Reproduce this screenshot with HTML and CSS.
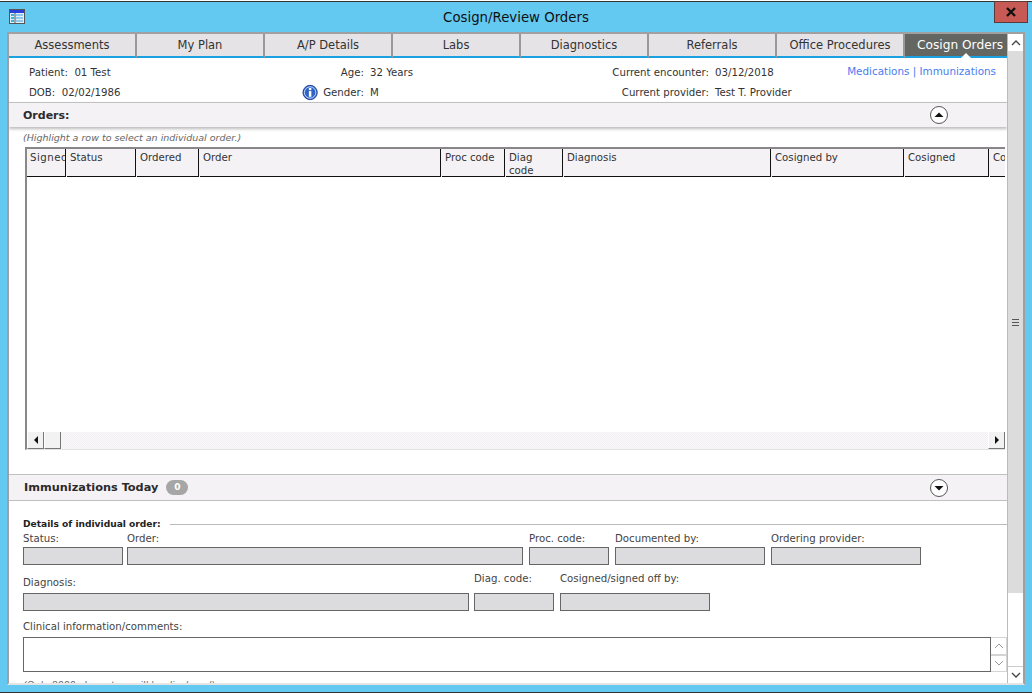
FILE: index.html
```html
<!DOCTYPE html>
<html lang="en">
<head>
    <meta charset="UTF-8">
    <title>Cosign/Review Orders</title>
    <link rel="stylesheet" href="styles.css">
</head>
<body>
    <div class="window">
        <div class="titlebar">
            <svg class="app-icon" width="16" height="15" viewBox="0 0 16 15">
                <rect x="0.5" y="0.5" width="15" height="14" fill="#dff1fb" stroke="#555"/>
                <rect x="1" y="1" width="14" height="3" fill="#2c3fd8"/>
                <path d="M2 6h3M2 9h3M2 12h3" stroke="#3ab4e4" stroke-width="2"/>
                <path d="M7 6h7M7 9h7M7 12h7" stroke="#8fc8e8" stroke-width="2"/>
                <path d="M6 4v10" stroke="#555"/>
            </svg>
            <span class="title">Cosign/Review Orders</span>
            <button class="close-btn">
                <svg width="12" height="10" viewBox="0 0 12 10"><path d="M2 1l8 8M10 1l-8 8" stroke="#111" stroke-width="2.4"/></svg>
            </button>
        </div>

        <div class="frame">
            <div class="tabs">
                <div class="tab">Assessments</div>
                <div class="tab">My Plan</div>
                <div class="tab">A/P Details</div>
                <div class="tab">Labs</div>
                <div class="tab">Diagnostics</div>
                <div class="tab">Referrals</div>
                <div class="tab">Office Procedures</div>
                <div class="tab active">Cosign Orders</div>
            </div>

            <div class="body-row">
                <div class="main">
                    <div class="patient">
                        <div>Patient:&nbsp; 01 Test</div>
                        <div class="lbl">Age:</div>
                        <div>32 Years</div>
                        <div class="lbl">Current encounter:</div>
                        <div>03/12/2018</div>
                        <div class="links">Medications | Immunizations</div>
                        <div>DOB:&nbsp; 02/02/1986</div>
                        <div class="lbl gender">
                            <svg width="17" height="17" viewBox="0 0 17 17">
                                <circle cx="8.5" cy="8.5" r="7.5" fill="#2f62c8" stroke="#1b3f96"/>
                                <circle cx="8.5" cy="8.5" r="6" fill="none" stroke="#cfe0fa"/>
                                <rect x="7.2" y="7" width="2.6" height="6" fill="#fff"/>
                                <rect x="7.2" y="3.8" width="2.6" height="2.2" fill="#fff"/>
                            </svg>
                            <span>Gender:</span>
                        </div>
                        <div>M</div>
                        <div class="lbl">Current provider:</div>
                        <div>Test T. Provider</div>
                        <div></div>
                    </div>

                    <div class="section orders-head">
                        <span class="section-name small">Orders:</span>
                        <svg class="toggle" width="20" height="20" viewBox="0 0 20 20">
                            <circle cx="10" cy="10" r="8.5" fill="#fff" stroke="#555"/>
                            <path d="M5.5 12L10 7.5l4.5 4.500z" fill="#111"/>
                        </svg>
                    </div>
                    <p class="hint">(Highlight a row to select an individual order.)</p>

                    <div class="grid-box">
                        <div class="grid-head">
                            <div class="col w-signed">Signed</div>
                            <div class="col w-status">Status</div>
                            <div class="col w-ordered">Ordered</div>
                            <div class="col w-order">Order</div>
                            <div class="col w-proc">Proc code</div>
                            <div class="col w-diag">Diag<br>code</div>
                            <div class="col w-diagnosis">Diagnosis</div>
                            <div class="col w-cosby">Cosigned by</div>
                            <div class="col w-cos">Cosigned</div>
                            <div class="col w-last">Cosigned</div>
                        </div>
                        <div class="grid-rows"></div>
                        <div class="hscroll">
                            <div class="hbtn"><span class="arrow-left"></span></div>
                            <div class="hthumb"></div>
                            <div class="htrack"></div>
                            <div class="hbtn"><span class="arrow-right"></span></div>
                        </div>
                    </div>

                    <div class="section imm-head">
                        <div class="imm-left">
                            <span class="section-name">Immunizations Today</span>
                            <span class="badge">0</span>
                        </div>
                        <svg class="toggle" width="20" height="20" viewBox="0 0 20 20">
                            <circle cx="10" cy="10" r="8.5" fill="#fff" stroke="#555"/>
                            <path d="M5.500 8L10 12.500 14.500 8z" fill="#111"/>
                        </svg>
                    </div>

                    <div class="details-title"><b>Details of individual order:</b><span class="rule"></span></div>

                    <div class="field-row row-one">
                        <div class="field w-100"><label>Status:</label><div class="box"></div></div>
                        <div class="field w-396"><label>Order:</label><div class="box"></div></div>
                        <div class="field w-80"><label>Proc. code:</label><div class="box"></div></div>
                        <div class="field w-150"><label>Documented by:</label><div class="box"></div></div>
                        <div class="field w-150"><label>Ordering provider:</label><div class="box"></div></div>
                    </div>

                    <div class="field-row row-two">
                        <div class="field w-446"><label class="low">Diagnosis:</label><div class="box"></div></div>
                        <div class="field w-80"><label>Diag. code:</label><div class="box"></div></div>
                        <div class="field w-150"><label>Cosigned/signed off by:</label><div class="box"></div></div>
                    </div>

                    <label class="comments-label">Clinical information/comments:</label>
                    <div class="comments">
                        <div class="textbox"></div>
                        <div class="spin">
                            <div class="spin-btn"><svg width="10" height="6" viewBox="0 0 10 6"><path d="M1 5l4-4 4 4" fill="none" stroke="#999"/></svg></div>
                            <div class="spin-btn"><svg width="10" height="6" viewBox="0 0 10 6"><path d="M1 1l4 4 4-4" fill="none" stroke="#999"/></svg></div>
                        </div>
                    </div>
                    <p class="hint clipped">(Only 8000 characters will be displayed)</p>
                </div>

                <div class="vscroll">
                    <div class="vbtn"><svg width="10" height="6" viewBox="0 0 10 6"><path d="M1 5l4-4 4 4" fill="none" stroke="#444" stroke-width="1.300"/></svg></div>
                    <div class="vthumb"><span class="grip"></span></div>
                    <div class="vtrack"></div>
                    <div class="vbtn bottom"><svg width="10" height="6" viewBox="0 0 10 6"><path d="M1 1l4 4 4-4" fill="none" stroke="#444" stroke-width="1.300"/></svg></div>
                </div>
            </div>
        </div>
    </div>
</body>
</html>
```

FILE: styles.css
```css
* {
    box-sizing: border-box;
}
html, body {
    margin: 0;
    height: 694px;
    overflow: hidden;
}
body {
    font-family: "DejaVu Sans", sans-serif;
    font-size: 10.2px;
    color: #333;
    background: #fff;
}
.window {
    height: 692px;
    margin-top: 1px;
    background: #63c9f1;
    border-top: 1px solid #333;
    border-bottom: 1px solid #333;
    display: flex;
    flex-direction: column;
}

/* title bar */
.titlebar {
    height: 30px;
    flex: none;
    position: relative;
    display: flex;
    align-items: center;
    justify-content: center;
}
.app-icon {
    position: absolute;
    left: 9px;
    top: 7px;
}
.title {
    font-size: 13.3px;
    color: #111;
}
.close-btn {
    position: absolute;
    right: 4px;
    top: -1px;
    width: 34px;
    height: 22px;
    padding: 0;
    background: #c75a55;
    border: 1px solid #5b3a3a;
    display: flex;
    align-items: center;
    justify-content: center;
}

/* frame + tabs */
.frame {
    flex: 1;
    margin: 0 7px 7px 7px;
    border: 2px solid #a0a0a0;
    border-bottom: 2px solid #e4e4e4;
    background: #fff;
    display: flex;
    flex-direction: column;
    overflow: hidden;
}
.tabs {
    display: flex;
    height: 24px;
    flex: none;
}
.tab {
    width: 128px;
    height: 24px;
    background: #e6e3e6;
    border-right: 2px solid #999;
    border-bottom: 2px solid #1ba1e2;
    font-size: 11.5px;
    display: flex;
    align-items: center;
    justify-content: center;
    color: #333;
}
.tab.active {
    position: relative;
    flex: 1;
    background: #646662;
    color: #fff;
    border-right: none;
    white-space: nowrap;
    font-size: 12.2px;
    margin-right: 16px;
    padding-left: 8px;
}
.tab.active::after {
    content: "";
    position: absolute;
    left: 56px;
    bottom: -2px;
    border: 5px solid transparent;
    border-bottom-color: #fff;
    border-top: none;
}

.body-row {
    flex: 1;
    display: flex;
    min-height: 0;
    margin-top: -24px;
}
.main {
    flex: 1;
    min-width: 0;
    padding-top: 24px;
    overflow: hidden;
}

/* patient strip */
.patient {
    display: grid;
    grid-template-columns: 276px 65px 135px 210px 133px 1fr;
    grid-auto-rows: 20px;
    padding: 4px 11px 0 20px;
    height: 44px;
    align-items: center;
    white-space: nowrap;
}
.lbl {
    text-align: right;
    padding-right: 6px;
}
.gender {
    display: flex;
    justify-content: flex-end;
    align-items: center;
    gap: 5px;
    margin-left: -3px;
}
.links {
    color: #4a7cf0;
    font-size: 10.4px;
    text-align: right;
    margin-top: -3px;
    margin-left: -40px;
}

/* collapsible section bars */
.section {
    display: flex;
    align-items: center;
    justify-content: space-between;
    background: #f5f2f6;
    border-top: 1px solid #c0c0c0;
    padding: 0 58px 0 14px;
}
.orders-head {
    height: 25px;
    box-shadow: 0 2px 3px #bbb;
}
.imm-head {
    height: 27px;
    margin-top: 24px;
    border-bottom: 1px solid #c0c0c0;
}
.section-name {
    font-size: 11.3px;
    font-weight: bold;
    color: #2b2b2b;
}
.section-name.small {
    font-size: 11px;
}
.imm-left {
    display: flex;
    align-items: center;
    gap: 8px;
    padding-left: 1px;
}
.badge {
    width: 22px;
    height: 15px;
    border-radius: 8px;
    background: #a6a6a6;
    color: #fff;
    font-size: 9px;
    font-weight: bold;
    text-align: center;
    line-height: 15px;
}
.hint {
    margin: 4px 0 0 14px;
    font-size: 9.5px;
    font-style: italic;
    color: #666;
    height: 14px;
    line-height: 14px;
}
.hint.clipped {
    margin-top: 6px;
}

/* orders grid */
.grid-box {
    margin: 2px 2px 0 16px;
    height: 303px;
    border-top: 2px solid #888;
    border-left: 2px solid #888;
    border-bottom: 1px solid #e2e2e2;
    display: flex;
    flex-direction: column;
}
.grid-head {
    display: flex;
    height: 28px;
    flex: none;
    overflow: hidden;
    background: #f5f2f6;
}
.col {
    flex: none;
    height: 28px;
    padding: 2px 0 0 3px;
    border-right: 1px solid #111;
    border-bottom: 1px solid #111;
    line-height: 13px;
    overflow: hidden;
    white-space: nowrap;
    margin-right: 1px;
}
.w-signed { width: 39px; letter-spacing: 0.5px; }
.w-status { width: 69px; }
.w-ordered { width: 62px; }
.w-order { width: 241px; }
.w-proc { width: 63px; }
.w-diag { width: 57px; }
.w-diagnosis { width: 207px; }
.w-cosby { width: 132px; }
.w-cos { width: 84px; }
.w-last { width: 40px; }
.grid-rows {
    flex: 1;
}
.hscroll {
    height: 17px;
    flex: none;
    display: flex;
    background: repeating-conic-gradient(#f2eff3 0 25%, #fbfafb 0 50%) 0 0 / 2px 2px;
}
.hbtn, .hthumb {
    width: 17px;
    height: 17px;
    background: #f2f2f2;
    border-right: 1px solid #777;
    border-bottom: 1px solid #777;
    border-left: 1px solid #fff;
    display: flex;
    align-items: center;
    justify-content: center;
}
.htrack {
    flex: 1;
}
.arrow-left, .arrow-right {
    border: 4px solid transparent;
    border-left-width: 0;
    border-right-color: #111;
}
.arrow-right {
    border-right-width: 0;
    border-left: 4px solid #111;
}

/* detail fields */
.details-title {
    display: flex;
    align-items: center;
    gap: 9px;
    margin: 17px 0 0 14px;
    height: 12px;
    color: #222;
}
.details-title b {
    font-size: 9.1px;
}
.rule {
    flex: 1;
    border-top: 1px solid #bbb;
}
.field-row {
    display: flex;
    margin-left: 14px;
}
.row-one {
    gap: 4px;
    margin-top: 3px;
}
.row-two {
    gap: 5px;
    margin-top: 8px;
}
.w-100 { width: 100px; }
.w-396 { width: 396px; margin-right: 2px; }
.w-80 { width: 80px; margin-right: 2px; }
.w-150 { width: 150px; margin-right: 2px; }
.w-446 { width: 446px; }
.row-two .w-80 { margin-right: 1px; }
.field label {
    display: block;
    height: 14px;
    line-height: 12px;
    white-space: nowrap;
    color: #444;
}
.box {
    height: 18px;
    background: #dcdbdd;
    border: 1px solid #666;
}
.row-two .field {
    height: 38px;
    display: flex;
    flex-direction: column;
    justify-content: flex-end;
}
.row-two .field label {
    height: 20px;
}
.row-two .field label.low {
    line-height: 20px;
}
.comments-label {
    display: block;
    margin: 10px 0 0 14px;
    height: 16px;
    line-height: 12px;
    color: #444;
}
.comments {
    display: flex;
    margin-left: 14px;
    height: 35px;
}
.textbox {
    flex: 1;
    border: 1px solid #666;
    background: #fff;
}
.spin {
    width: 16px;
    display: flex;
    flex-direction: column;
}
.spin-btn {
    flex: 1;
    border: 1px solid #d4d4d4;
    border-left: none;
    display: flex;
    align-items: center;
    justify-content: center;
}

/* window scrollbar */
.vscroll {
    width: 16px;
    flex: none;
    display: flex;
    flex-direction: column;
    background: #fff;
    border-left: 1px solid #bbb;
    position: relative;
}
.vbtn {
    height: 17px;
    flex: none;
    display: flex;
    align-items: center;
    justify-content: center;
    background: #fff;
}
.vbtn.bottom {
    border-top: 1px solid #ccc;
}
.vthumb {
    height: 542px;
    flex: none;
    background: #dcdcdc;
    display: flex;
    align-items: center;
    justify-content: center;
}
.grip {
    width: 7px;
    height: 7px;
    border-top: 1px solid #555;
    border-bottom: 1px solid #555;
    background: linear-gradient(#555, #555) center / 100% 1px no-repeat;
}
.vtrack {
    flex: 1;
}
```
